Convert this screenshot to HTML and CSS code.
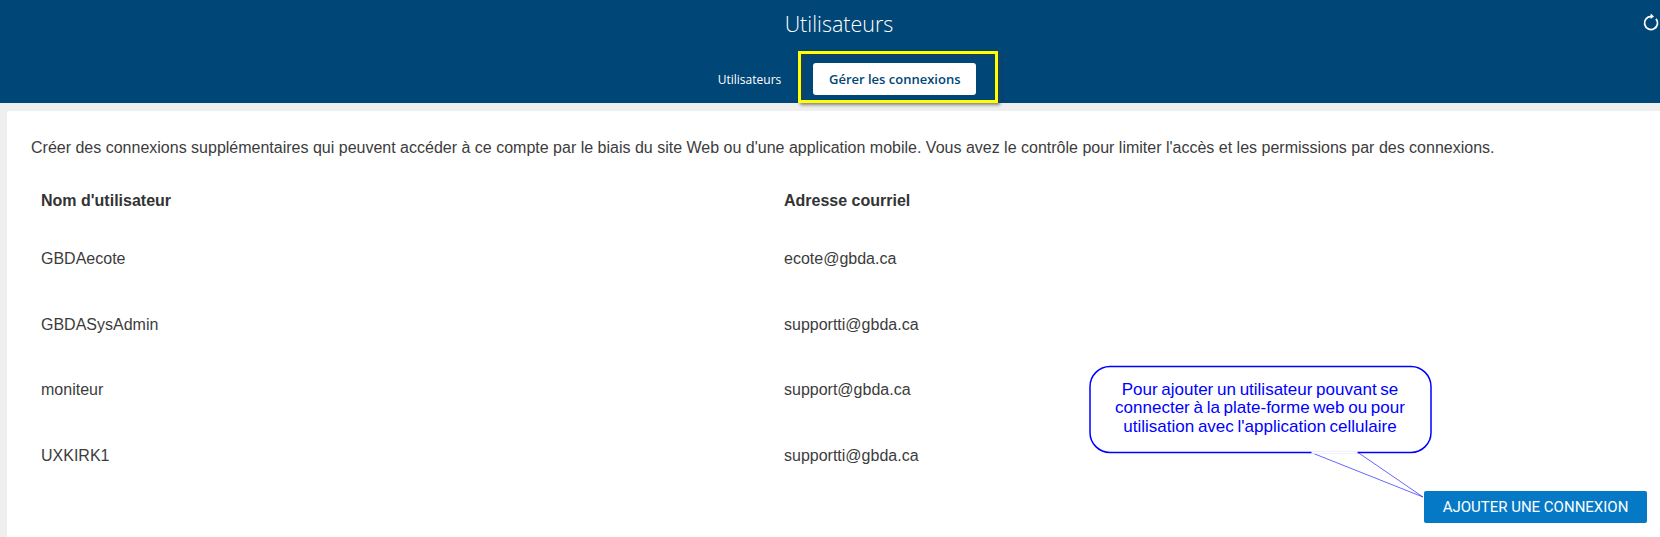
FILE: index.html
```html
<!DOCTYPE html>
<html lang="fr">
<head>
<meta charset="utf-8">
<title>Utilisateurs</title>
<link rel="stylesheet" href="styles.css">
</head>
<body>
<header class="top">
  <h1 class="title">Utilisateurs</h1>
  <svg class="refresh" width="18" height="20" viewBox="0 0 18 20" aria-hidden="true">
    <path d="M14 6.800A6.500 6.500 0 1 1 9 4.500" fill="none" stroke="#fff" stroke-width="1.800"/>
    <path d="M8.700 1.500L12 4.500L8.700 7Z" fill="#fff"/>
  </svg>
  <nav class="tabs">
    <a class="tab">Utilisateurs</a>
    <a class="tab active">Gérer les connexions</a>
  </nav>
  <div class="highlight"></div>
</header>
<main class="card">
  <p class="intro">Créer des connexions supplémentaires qui peuvent accéder à ce compte par le biais du site Web ou d'une application mobile. Vous avez le contrôle pour limiter l'accès et les permissions par des connexions.</p>
  <div class="table">
    <div class="row head"><span>Nom d'utilisateur</span><span>Adresse courriel</span></div>
    <div class="row"><span>GBDAecote</span><span>ecote@gbda.ca</span></div>
    <div class="row"><span>GBDASysAdmin</span><span>supportti@gbda.ca</span></div>
    <div class="row"><span>moniteur</span><span>support@gbda.ca</span></div>
    <div class="row"><span>UXKIRK1</span><span>supportti@gbda.ca</span></div>
  </div>
  <button class="add">AJOUTER UNE CONNEXION</button>
</main>
<div class="callout">
  <svg class="bubble" width="350" height="142" viewBox="0 0 350 142" aria-hidden="true">
    <path d="M222 87.500L334 132L269 87.500Z" fill="#fff" stroke="#0000ff" stroke-width="0.600"/>
    <path d="M21 1.500H322A20 20 0 0 1 342 21.500V67.500A20 20 0 0 1 322 87.500H21A20 20 0 0 1 1 67.500V21.500A20 20 0 0 1 21 1.500Z" fill="#fff" stroke="#0000ff" stroke-width="1.500"/>
    <path d="M222.500 87.500H268.500" fill="none" stroke="#fff" stroke-width="2.500"/>
  </svg>
  <p class="callout-text">Pour ajouter un utilisateur pouvant se<br>connecter à la plate-forme web ou pour<br>utilisation avec l'application cellulaire</p>
</div>
</body>
</html>
```
FILE: styles.css
```css
* { box-sizing: border-box; }
html, body { margin: 0; height: 537px; overflow: hidden; }
body {
  position: relative;
  background: #efefef;
  font-family: "Liberation Sans", Arial, sans-serif;
  color: #3c3c3c;
  font-size: 16px;
}
.top {
  position: relative;
  height: 103px;
  background: #004677;
  display: flex;
  flex-direction: column;
  align-items: center;
}
.title {
  margin: 10px 0 0;
  font-family: "Open Sans", sans-serif;
  font-weight: 300;
  font-size: 21.500px;
  line-height: 27px;
  color: #fff;
  transform: translateX(9px);
}
.refresh { position: absolute; left: 1642px; top: 12px; }
.tabs {
  display: flex;
  align-items: center;
  gap: 32px;
  margin-top: 26px;
  transform: translateX(17px);
}
.tab {
  font-family: "Open Sans", sans-serif;
  font-size: 12px;
  color: #fff;
}
.tab.active {
  width: 163px;
  height: 32px;
  background: #fff;
  border-radius: 3px;
  color: #004677;
  font-size: 13px;
  font-weight: 600;
  display: flex;
  align-items: center;
  justify-content: center;
}
.highlight {
  position: absolute;
  left: 798px;
  top: 51px;
  width: 200px;
  height: 52px;
  border: 3px solid #ffff00;
  box-shadow: 2px 2px 3px rgba(60, 60, 60, 0.6), inset 2px 2px 3px rgba(60, 60, 60, 0.5);
}
.card {
  position: absolute;
  left: 7px;
  top: 111px;
  right: 0;
  bottom: 0;
  background: #fff;
  border-radius: 3px 0 0 0;
  padding: 28px 0 0 25px;
}
.intro { margin: 0 0 0 -1px; line-height: 18px; white-space: nowrap; }
.table { margin-top: 35px; padding-left: 9px; }
.row {
  display: grid;
  grid-template-columns: 743px 1fr;
  height: 65.5px;
  line-height: 18px;
}
.row.head { font-weight: 700; height: 58px; color: #333; }
.add {
  position: absolute;
  left: 1417px;
  top: 380px;
  width: 223px;
  height: 32px;
  border: 0;
  border-radius: 2px;
  background: #0679c6;
  color: #fff;
  font-family: Roboto, sans-serif;
  font-size: 15px;
  font-weight: 400;
}
.callout {
  position: absolute;
  left: 1089px;
  top: 365px;
  width: 342px;
  height: 89px;
  display: flex;
  align-items: center;
  justify-content: center;
}
.bubble { position: absolute; left: 0; top: 0; }
.callout-text {
  position: relative;
  margin: 0 0 2px;
  color: #0000ff;
  font-size: 17px;
  line-height: 18.500px;
  text-align: center;
  word-spacing: -1px;
}
```
